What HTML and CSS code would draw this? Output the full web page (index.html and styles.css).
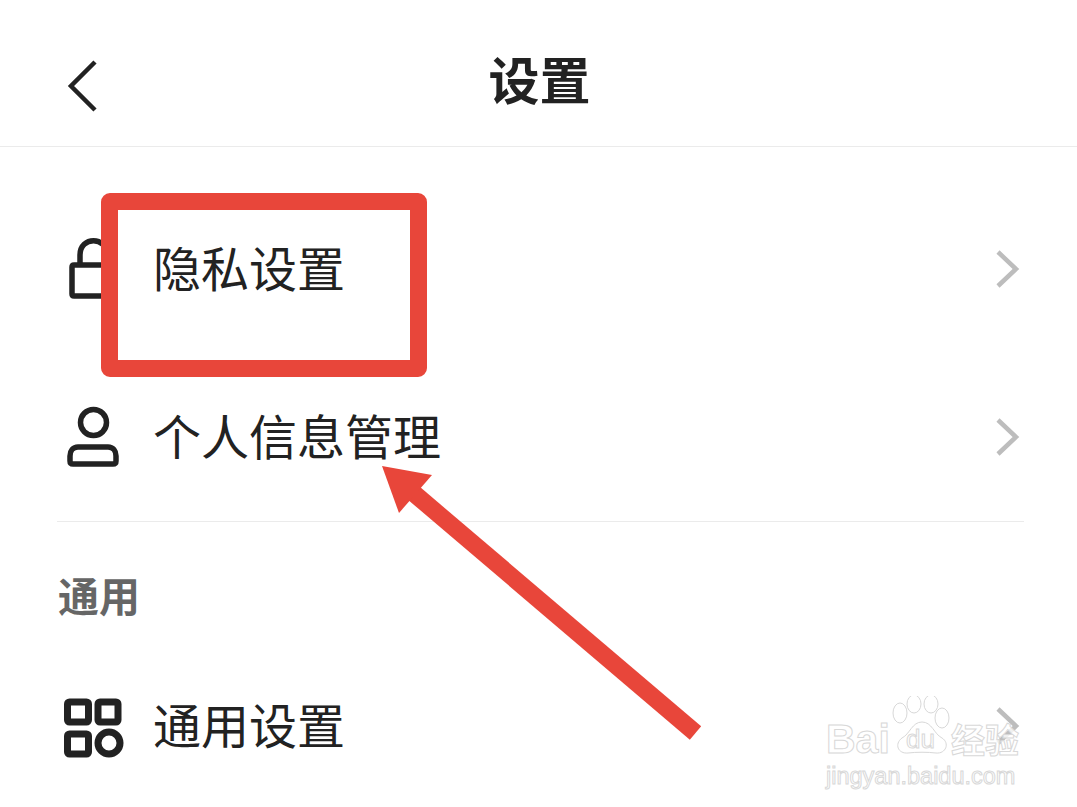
FILE: index.html
```html
<!DOCTYPE html>
<html>
<head>
	<meta http-equiv="Content-Type" content="text/html; charset=utf-8" />
	<title>设置</title>
	<link rel="stylesheet" href="styles.css">
</head>
<body>
	<div class="page">
		<div class="topbar">
			<svg class="back" width="34" height="52" viewBox="0 0 34 52"><path d="M28 2 L4 26 L28 50" /></svg>
			<h2 class="title">设置</h2>
		</div>

		<div class="row">
			<svg class="ico ico-thin" width="64" height="64" viewBox="0 0 64 64">
				<path d="M11 30 Q11 28 13 28 H50 Q52 28 52 30 V57 Q52 59 50 59 H13 Q11 59 11 57 Z M19 28 V18 C19 -1 46 -1 46 18 V28" />
			</svg>
			<span class="label">隐私设置</span>
			<svg class="more" width="26" height="40" viewBox="0 0 26 40"><path d="M3 3 L21 20 L3 37" /></svg>
		</div>
		<div class="row">
			<svg class="ico ico-thin" width="64" height="64" viewBox="0 0 64 64">
				<circle cx="32.5" cy="17.5" r="13" />
				<path d="M17 42 H47 C52 42 55 46 55 51 V56 Q55 59 52 59 H12 Q9 59 9 56 V51 C9 46 12 42 17 42 Z" />
			</svg>
			<span class="label">个人信息管理</span>
			<svg class="more" width="26" height="40" viewBox="0 0 26 40"><path d="M3 3 L21 20 L3 37" /></svg>
		</div>

		<div class="divider"></div>
		<div class="section">通用</div>

		<div class="row">
			<svg class="ico" width="64" height="64" viewBox="0 0 64 64">
				<rect x="6.5" y="8" width="21" height="20" rx="2" />
				<rect x="37" y="8" width="20" height="20" rx="2" />
				<rect x="6.5" y="40" width="21" height="20" rx="2" />
				<circle cx="48" cy="49" r="11" />
			</svg>
			<span class="label">通用设置</span>
			<svg class="more" width="26" height="40" viewBox="0 0 26 40"><path d="M3 3 L21 20 L3 37" /></svg>
		</div>

		<!-- 标注 -->
		<div class="mark-box"></div>
		<svg class="mark-arrow" width="1077" height="807" viewBox="0 0 1077 807">
			<path d="M695.5 733 L410 490" />
			<polygon points="382,466 432,475 399,513" />
		</svg>

		<!-- 水印 -->
		<div class="wm">
			<div class="wm-top">
				<span class="wm-bai">Bai</span>
				<span class="wm-cn">经验</span>
			</div>
			<div class="wm-url">jingyan.baidu.com</div>
			<svg class="wm-paw" width="60" height="60" viewBox="0 0 60 60">
				<ellipse cx="8" cy="17" rx="7" ry="10" />
				<ellipse cx="22" cy="8" rx="7" ry="9" />
				<ellipse cx="39" cy="8" rx="7" ry="9" />
				<ellipse cx="50" cy="22" rx="7" ry="10" />
				<path d="M30 26 C20 26 18 38 10 42 C2 48 6 58 16 57 C24 56 36 56 44 57 C54 58 58 47 50 42 C42 38 40 26 30 26 Z" />
			</svg>
			<span class="wm-du">du</span>
		</div>
	</div>
</body>
</html>
```

FILE: styles.css
```css
html, body {
	margin: 0;
	padding: 0;
	background-color: #fff;
}

.page {
	position: relative;
	width: 1077px;
	height: 807px;
	overflow: hidden;
	font-family: "Noto Sans CJK SC", "Liberation Sans", sans-serif;
	color: #222;
}

.topbar {
	position: relative;
	height: 146px;
	border-bottom: 1px solid #ebebeb;
	display: flex;
	align-items: center;
	justify-content: center;
	margin-bottom: 38px;
}

.back {
	position: absolute;
	left: 67px;
	top: 60px;
}

.back path {
	fill: none;
	stroke: #222;
	stroke-width: 4.5;
}

.title {
	margin: 10px 0 0 2px;
	font-size: 51px;
	font-weight: 700;
	line-height: 60px;
}

.row {
	height: 168px;
	display: flex;
	align-items: center;
	padding: 0 56px 0 61px;
}

.ico {
	flex: none;
	margin-right: 28px;
}

.ico path, .ico circle, .ico rect {
	fill: none;
	stroke: #222;
	stroke-width: 7;
}

.ico-thin path, .ico-thin circle {
	stroke-width: 5.5;
}

.label {
	flex: 1;
	font-size: 48px;
	line-height: 60px;
	margin-bottom: 7px;
}

.more path {
	fill: none;
	stroke: #bdbdbd;
	stroke-width: 4.5;
}

.divider {
	height: 1px;
	margin: 0 53px 0 57px;
	background-color: #ebebeb;
}

.section {
	height: 120px;
	box-sizing: border-box;
	padding: 47px 0 0 58px;
	font-size: 41px;
	line-height: 50px;
	font-weight: 700;
	color: #666;
}

.mark-box {
	position: absolute;
	left: 101px;
	top: 193px;
	width: 326px;
	height: 184px;
	box-sizing: border-box;
	border: 17px solid #e8463a;
	border-radius: 9px;
}

.mark-arrow {
	position: absolute;
	left: 0;
	top: 0;
}

.mark-arrow path {
	fill: none;
	stroke: #e8463a;
	stroke-width: 17.5;
}

.mark-arrow polygon {
	fill: #e8463a;
}

.wm {
	position: absolute;
	left: 826px;
	top: 690px;
	width: 193px;
	height: 95px;
	font-family: "Liberation Sans", "Noto Sans CJK SC", sans-serif;
	color: rgba(255, 255, 255, 0.8);
	-webkit-text-stroke: 1px #d8d8d8;
}

.wm-top {
	display: flex;
	align-items: baseline;
	justify-content: space-between;
	padding-top: 27px;
	height: 44px;
}

.wm-bai {
	font-size: 41px;
	line-height: 44px;
	font-weight: 700;
}

.wm-cn {
	font-size: 34px;
	line-height: 44px;
	font-weight: 700;
}

.wm-url {
	font-size: 23.5px;
	line-height: 26px;
	margin-top: 2px;
	white-space: nowrap;
}

.wm-paw {
	position: absolute;
	left: 66px;
	top: 6px;
}

.wm-paw ellipse, .wm-paw path {
	fill: rgba(255, 255, 255, 0.8);
	stroke: #d8d8d8;
	stroke-width: 1;
}

.wm-du {
	position: absolute;
	left: 80px;
	top: 36px;
	font-size: 26px;
	line-height: 26px;
}
```
